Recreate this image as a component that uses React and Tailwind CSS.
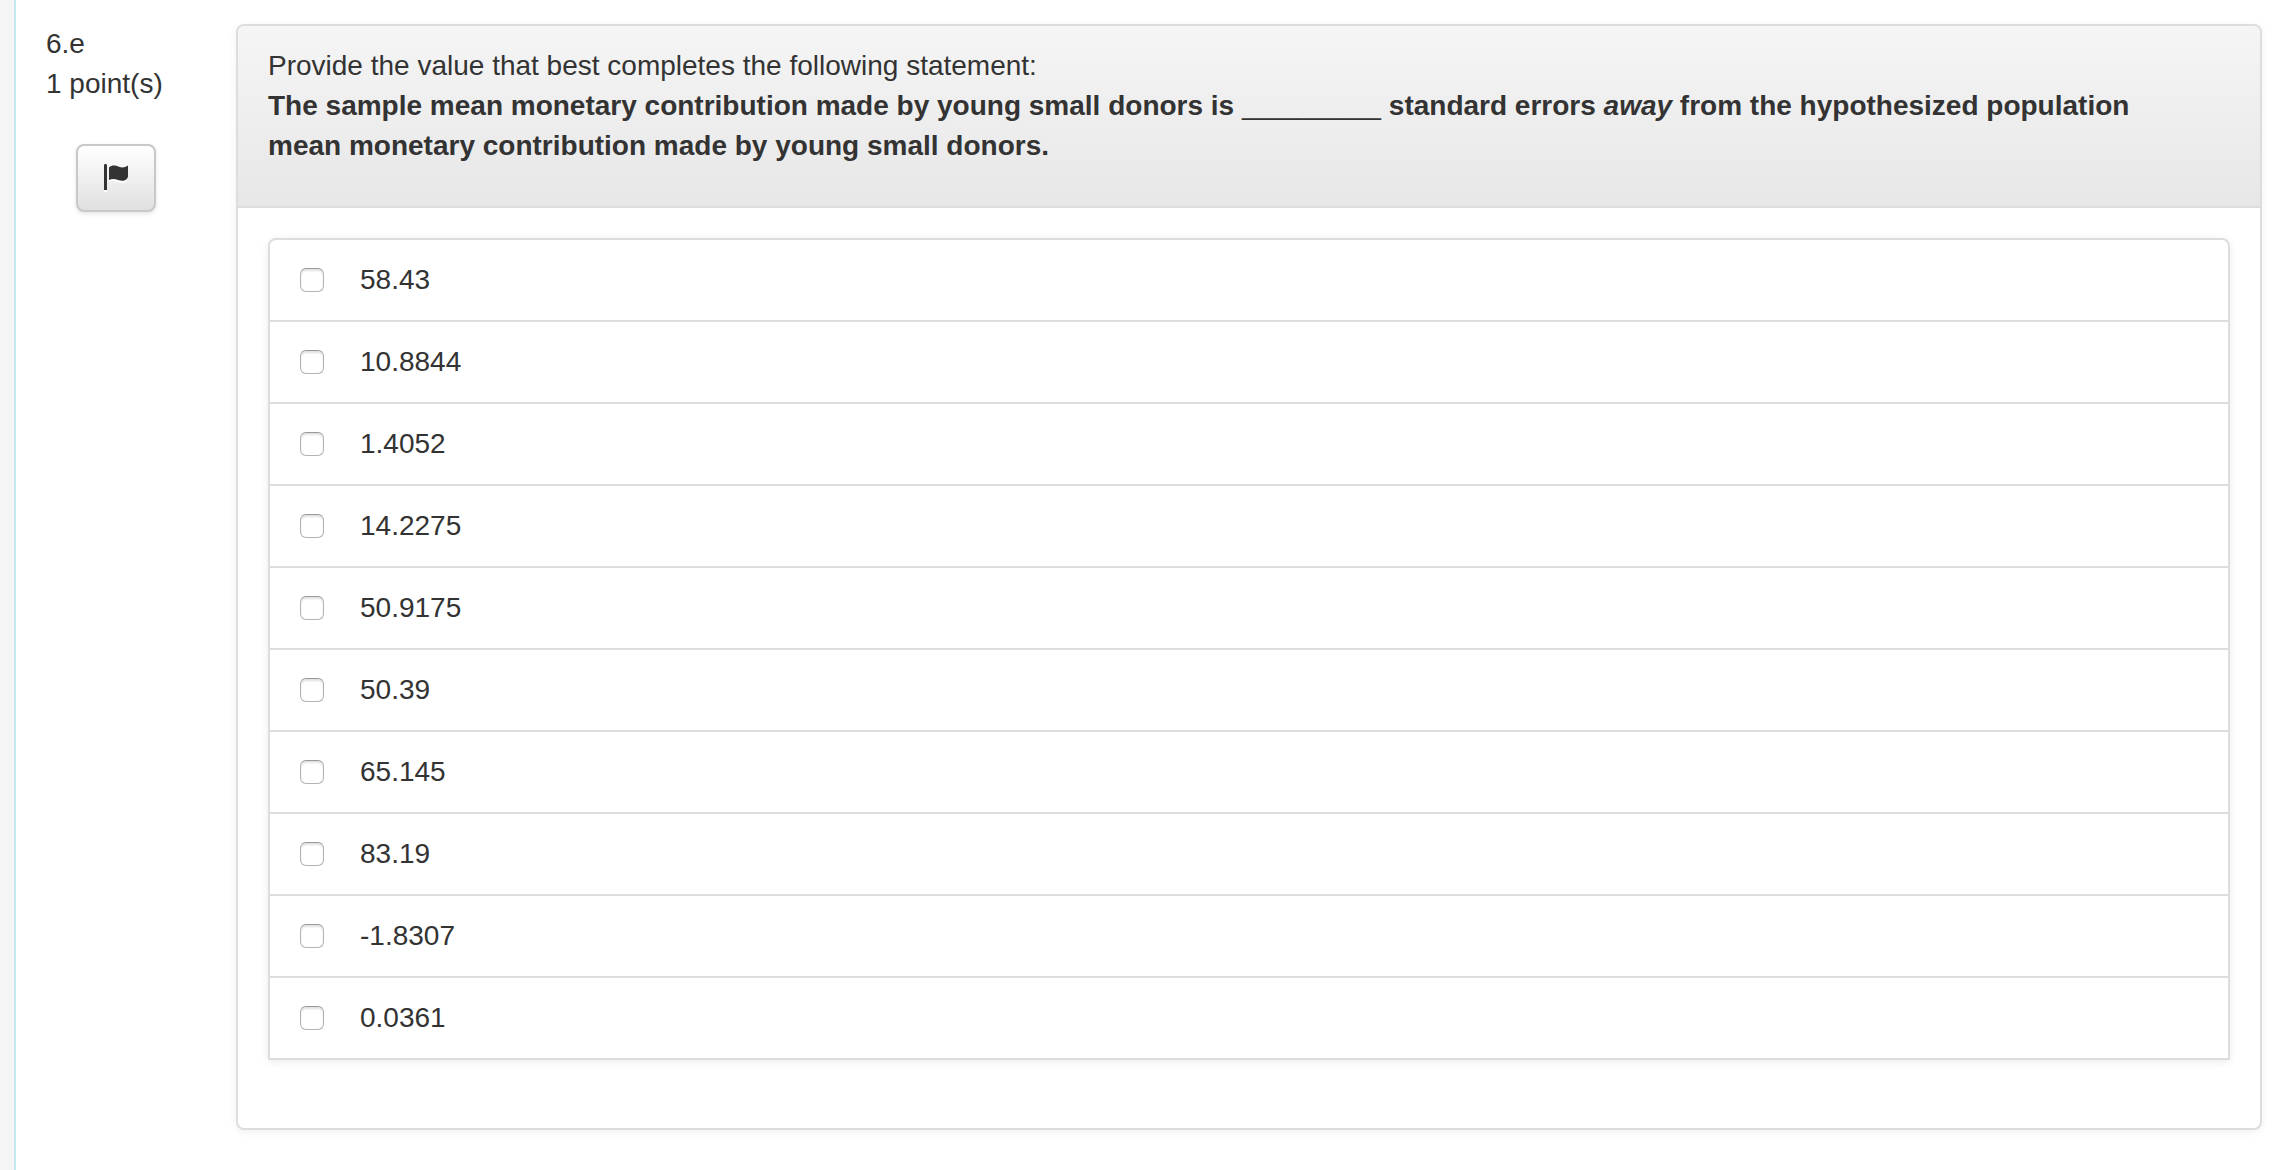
import { useState } from 'react';

const CHOICES = [
  { id: 'a', label: '58.43' },
  { id: 'b', label: '10.8844' },
  { id: 'c', label: '1.4052' },
  { id: 'd', label: '14.2275' },
  { id: 'e', label: '50.9175' },
  { id: 'f', label: '50.39' },
  { id: 'g', label: '65.145' },
  { id: 'h', label: '83.19' },
  { id: 'i', label: '-1.8307' },
  { id: 'j', label: '0.0361' },
];

const FLAG_POLE = 'M0 .8Q0 0 1.500 0T3 .8V26H0z';
const FLAG_CLOTH = 'M5 3.500C8 1 11 1 15 2.800c3 1.200 6 .8 9-1.300V12c0 1.500-.5 2.300-1.500 3.200-2.500 2-5 2-8.500.8-3.500-1.300-6-1.300-9 0z';

const FlagIcon = () => (
  <svg width="24" height="28" viewBox="0 0 24 28" aria-hidden="true">
    <g className="fill-white" transform="translate(0 2)">
      <path d={FLAG_POLE} />
      <path d={FLAG_CLOTH} />
    </g>
    <g className="fill-[#333]">
      <path d={FLAG_POLE} />
      <path d={FLAG_CLOTH} />
    </g>
  </svg>
);

const Choice = ({ id, label, checked, onToggle }) => (
  <li className="border-b-2 border-[#ddd] last:border-b-0">
    <label htmlFor={`choice-${id}`} className="flex cursor-pointer items-center gap-9 px-[30px] py-5">
      <input
        id={`choice-${id}`}
        type="checkbox"
        checked={checked}
        onChange={() => onToggle(id)}
        className="size-6 shrink-0 appearance-none rounded-md border border-[#b4b4b4] border-t-[#999] bg-white shadow-[inset_0_2px_2px_rgba(0,0,0,0.12)] checked:bg-[#0088cc]"
      />
      <span>{label}</span>
    </label>
  </li>
);

export default function App() {
  const [selected, setSelected] = useState([]);
  const [flagged, setFlagged] = useState(false);

  const toggle = (id) => {
    setSelected(prev => prev.includes(id) ? prev.filter(s => s !== id) : [...prev, id]);
  };

  return (
    <div className="flex min-h-screen bg-[#f5f5f5] pl-3.5 font-['Liberation_Sans',Arial,sans-serif] text-[28px] leading-10 text-[#333]">
      <main className="flex flex-1 items-start border-l-2 border-[#c4e8f0] bg-white py-6 pr-[18px] pl-[30px]">
        {/* Question info */}
        <aside className="w-[190px] shrink-0">
          <p>6.e</p>
          <p>1 point(s)</p>
          <button
            type="button"
            aria-label="Flag question"
            aria-pressed={flagged}
            onClick={() => setFlagged(!flagged)}
            className="mt-10 ml-[30px] flex h-[68px] w-20 items-center justify-center rounded-lg border-2 border-[#c8c8c8] bg-linear-to-b from-white to-[#e0e0e0] shadow-[0_2px_4px_rgba(0,0,0,0.1)]"
          >
            <FlagIcon />
          </button>
        </aside>

        {/* Question */}
        <section className="min-w-0 flex-1 rounded-lg border-2 border-[#ddd] bg-white shadow-[0_2px_8px_rgba(0,0,0,0.06)]">
          <header className="rounded-t-md border-b-2 border-[#ddd] bg-linear-to-b from-[#f5f5f5] to-[#e7e7e7] pt-5 pr-20 pb-10 pl-[30px]">
            <p>Provide the value that best completes the following statement:</p>
            <p className="font-bold">
              The sample mean monetary contribution made by young small donors is <span className="text-[25px] leading-none font-normal">__________</span> standard errors <em>away</em> from the hypothesized population mean monetary contribution made by young small donors.
            </p>
          </header>
          <div className="px-[30px] pt-[30px] pb-[68px]">
            <ul className="rounded-t-lg border-2 border-[#ddd] shadow-[0_2px_8px_rgba(0,0,0,0.08)]">
              {CHOICES.map(c => (
                <Choice key={c.id} {...c} checked={selected.includes(c.id)} onToggle={toggle} />
              ))}
            </ul>
          </div>
        </section>
      </main>
    </div>
  );
}
